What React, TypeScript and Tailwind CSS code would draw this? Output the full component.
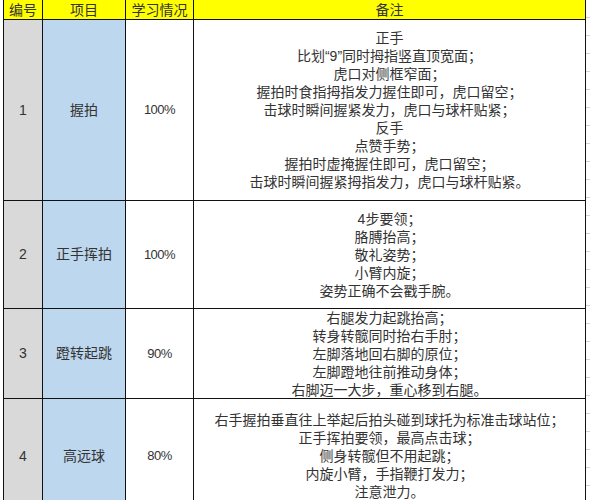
import React from 'react';

type Row = {
  no: string;
  item: string;
  rate: string;
  notes: string[];
  h: string;
};

const rows: Row[] = [
  {
    no: '1',
    item: '握拍',
    rate: '100%',
    h: 'h-[180px]',
    notes: [
      '正手',
      '比划“9”同时拇指竖直顶宽面；',
      '虎口对侧框窄面；',
      '握拍时食指拇指发力握住即可，虎口留空；',
      '击球时瞬间握紧发力，虎口与球杆贴紧；',
      '反手',
      '点赞手势；',
      '握拍时虚掩握住即可，虎口留空；',
      '击球时瞬间握紧拇指发力，虎口与球杆贴紧。',
    ],
  },
  {
    no: '2',
    item: '正手挥拍',
    rate: '100%',
    h: 'h-[107px]',
    notes: ['4步要领；', '胳膊抬高；', '敬礼姿势；', '小臂内旋；', '姿势正确不会戳手腕。'],
  },
  {
    no: '3',
    item: '蹬转起跳',
    rate: '90%',
    h: 'h-[89px]',
    notes: [
      '右腿发力起跳抬高；',
      '转身转髋同时抬右手肘；',
      '左脚落地回右脚的原位；',
      '左脚蹬地往前推动身体；',
      '右脚迈一大步，重心移到右腿。',
    ],
  },
  {
    no: '4',
    item: '高远球',
    rate: '80%',
    h: 'h-[114px]',
    notes: [
      '右手握拍垂直往上举起后拍头碰到球托为标准击球站位；',
      '正手挥拍要领，最高点击球；',
      '侧身转髋但不用起跳；',
      '内旋小臂，手指鞭打发力；',
      '注意泄力。',
    ],
  },
];

const font = "font-['Liberation_Sans','Noto_Sans_CJK_SC',sans-serif]";

export default function App() {
  return (
    <div className={`w-[590px] h-[500px] overflow-hidden bg-white text-[#333] ${font}`}>
      <div className="flex">
        <div className="w-[3px] shrink-0" />
        <div className="w-[583px] shrink-0 bg-[#111] grid grid-cols-[38px_82px_67px_391px] gap-px px-px pb-px">
          {/* Header */}
          <div className="h-[19px] bg-[#ffff00] flex items-center justify-center text-[14px] leading-[18px]">编号</div>
          <div className="h-[19px] bg-[#ffff00] flex items-center justify-center text-[14px] leading-[18px]">项目</div>
          <div className="h-[19px] bg-[#ffff00] flex items-center justify-center text-[14px] leading-[18px]">学习情况</div>
          <div className="h-[19px] bg-[#ffff00] flex items-center justify-center text-[14px] leading-[18px]">备注</div>

          {rows.map((r) => (
            <React.Fragment key={r.no}>
              <div className={`${r.h} bg-[#d9d9d9] flex items-center justify-center text-[14px]`}>{r.no}</div>
              <div className={`${r.h} bg-[#bdd7ee] flex items-center justify-center text-[14px]`}>{r.item}</div>
              <div className={`${r.h} bg-white flex items-center justify-center text-[13px] tracking-[-0.5px]`}>{r.rate}</div>
              <div className={`${r.h} bg-white flex flex-col items-center justify-center text-[14px] leading-[18px] whitespace-nowrap overflow-visible`}>
                {r.notes.map((n, i) => (
                  <div key={i}>{n}</div>
                ))}
              </div>
            </React.Fragment>
          ))}
        </div>
        <div className="flex-1 flex flex-col">
          {Array.from({ length: 28 }).map((_, i) => (
            <div key={i} className="h-[18px] border-b border-[#d4d4d4]" />
          ))}
        </div>
      </div>
    </div>
  );
}
